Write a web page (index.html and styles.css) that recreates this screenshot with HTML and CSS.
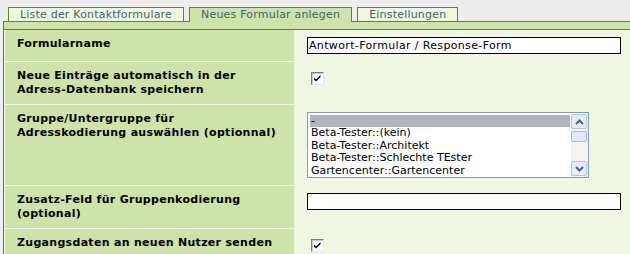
FILE: index.html
```html
<!DOCTYPE html>
<html lang="de">
<head>
<meta charset="utf-8">
<title>Neues Formular anlegen</title>
<link rel="stylesheet" href="styles.css">
</head>
<body>
<div class="tabs">
  <div class="tab">Liste der Kontaktformulare</div>
  <div class="tab active">Neues Formular anlegen</div>
  <div class="tab">Einstellungen</div>
</div>
<div class="band"></div>
<div class="panel">
  <div class="form">
    <div class="label">Formularname</div>
    <div class="field"><div class="text-input">Antwort-Formular / Response-Form</div></div>

    <div class="label">Neue Einträge automatisch in der Adress-Datenbank speichern</div>
    <div class="field"><span class="check"><svg width="11" height="11" viewBox="0 0 11 11"><path d="M2 4.5 L4 6.5 L8.5 2 L8.5 4 L4 8.5 L2 6.5 Z" fill="#000"/></svg></span></div>

    <div class="label">Gruppe/Untergruppe für Adresskodierung auswählen (optionnal)</div>
    <div class="field">
      <div class="listbox">
        <div class="options">
          <div class="opt sel">-</div>
          <div class="opt">Beta-Tester::(kein)</div>
          <div class="opt">Beta-Tester::Architekt</div>
          <div class="opt">Beta-Tester::Schlechte TEster</div>
          <div class="opt">Gartencenter::Gartencenter</div>
        </div>
        <div class="scrollbar">
          <div class="sbtn"><svg width="9" height="6" viewBox="0 0 9 6"><path d="M1 5 L4.5 1.5 L8 5" fill="none" stroke="#4d6185" stroke-width="2"/></svg></div>
          <div class="thumb"></div>
          <div class="track"></div>
          <div class="sbtn"><svg width="9" height="6" viewBox="0 0 9 6"><path d="M1 1 L4.5 4.5 L8 1" fill="none" stroke="#4d6185" stroke-width="2"/></svg></div>
        </div>
      </div>
    </div>

    <div class="label">Zusatz-Feld für Gruppenkodierung (optional)</div>
    <div class="field"><div class="text-input"></div></div>

    <div class="label">Zugangsdaten an neuen Nutzer senden</div>
    <div class="field"><span class="check"><svg width="11" height="11" viewBox="0 0 11 11"><path d="M2 4.5 L4 6.5 L8.5 2 L8.5 4 L4 8.5 L2 6.5 Z" fill="#000"/></svg></span></div>
  </div>
</div>
</body>
</html>
```
FILE: styles.css
```css
html, body {
  margin: 0;
  padding: 0;
}
body {
  background: #ededed;
  font-family: "DejaVu Sans", Verdana, sans-serif;
  width: 630px;
  height: 254px;
  overflow: hidden;
}
.tabs {
  display: flex;
  gap: 5px;
  padding: 7px 0 0 8px;
  position: relative;
  z-index: 1;
}
.tab {
  border: 1px solid #5e8c12;
  border-bottom: none;
  background: #f0f7e1;
  color: #446273;
  font-size: 11px;
  letter-spacing: 0.2px;
  line-height: 13px;
  height: 13px;
  padding: 0 11px;
  white-space: nowrap;
}
.tab.active {
  background: #cfe2a9;
  height: 14px;
  margin-bottom: -1px;
}
.band {
  margin-left: 3px;
  height: 7px;
  background: #cfe2a9;
  border: 1px solid #5e8c12;
  border-right: none;
}
.panel {
  margin-left: 3px;
  border-left: 1px solid #5e8c12;
  background: #eff6e1;
  height: 300px;
}
.form {
  display: grid;
  grid-template-columns: 289px 1fr;
  row-gap: 1px;
  padding-left: 1px;
}
.label {
  background: #cfe2a9;
  color: #000;
  font-weight: bold;
  font-size: 11px;
  letter-spacing: 0.3px;
  line-height: 14px;
  padding: 7px 12px;
}
.field {
  padding: 7px 9px 7px 13px;
}
.text-input {
  height: 15px;
  border: 1px solid #000;
  background: #fff;
  font-size: 11px;
  letter-spacing: 0.35px;
  line-height: 15px;
  padding: 0 1px;
  white-space: nowrap;
  overflow: hidden;
}
.check {
  display: inline-flex;
  align-items: center;
  justify-content: center;
  box-sizing: border-box;
  width: 13px;
  height: 13px;
  margin: 3px 0 0 4px;
  background: #fff;
  border: 1px solid;
  border-color: #7b7b7b #e6e6e6 #e6e6e6 #7b7b7b;
  box-shadow: inset 1px 1px 0 #c9c9c9;
}
.listbox {
  display: flex;
  width: 280px;
  height: 64px;
  border: 1px solid #7f9db9;
  background: #fff;
  overflow: hidden;
}
.options {
  flex: 1;
  padding: 2px 1px 0 2px;
  font-size: 11px;
  line-height: 12.4px;
  color: #000;
  overflow: hidden;
}
.opt {
  padding-left: 1px;
  white-space: nowrap;
}
.opt.sel {
  background: #b1b4c0;
}
.scrollbar {
  width: 17px;
  display: flex;
  flex-direction: column;
  background: #f4f4f0;
  padding: 1px 1px 1px 0;
  box-sizing: border-box;
}
.sbtn {
  height: 15px;
  border: 1px solid #b6c5e4;
  border-radius: 2px;
  background: #e6ecfb;
  display: flex;
  align-items: center;
  justify-content: center;
  box-sizing: border-box;
}
.thumb {
  height: 9px;
  margin-top: 2px;
  border: 1px solid #a9b8d6;
  border-radius: 2px;
  background: #e4eafa;
}
.track {
  flex: 1;
}
```
